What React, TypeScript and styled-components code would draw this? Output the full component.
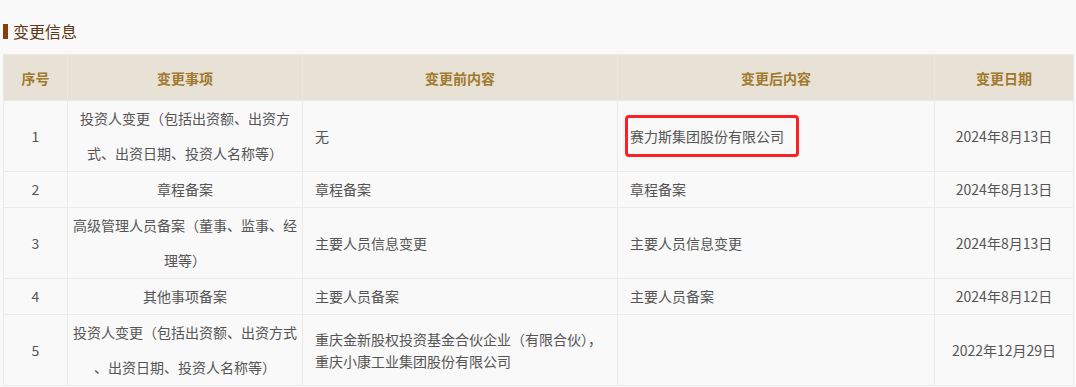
import React from "react";
import styled, { createGlobalStyle } from "styled-components";

const GlobalStyle = createGlobalStyle`
  html, body {
    margin: 0;
    padding: 0;
    background: #f9f9f9;
  }
  body {
    font-family: "Noto Sans CJK SC", "Microsoft YaHei", sans-serif;
    color: #555;
  }
`;

const Page = styled.div`
  padding: 24px 4px 0 3px;
  width: 1076px;
  box-sizing: border-box;
`;

const TitleRow = styled.div`
  display: flex;
  align-items: center;
  gap: 5px;
  height: 15px;
  margin-bottom: 15px;
`;

const Marker = styled.span`
  display: block;
  width: 5px;
  height: 15px;
  background: #8a3d0c;
`;

const TitleText = styled.h3`
  margin: 0;
  font-size: 16px;
  line-height: 15px;
  font-weight: 400;
  color: #5e3716;
`;

const Table = styled.table`
  width: 1070px;
  border-collapse: collapse;
  table-layout: fixed;
  font-size: 14px;
`;

const HeadCell = styled.th`
  height: 45px;
  padding: 0;
  background: #e8e1d6;
  color: #a1792c;
  font-weight: 700;
  font-size: 14px;
  text-align: center;
  border: 1px solid #ebe8e4;
`;

const Cell = styled.td<{ $align?: "left" | "center"; $tight?: boolean }>`
  padding: ${(p) => (p.$tight ? "0 5px" : "7px 12px")};
  line-height: ${(p) => (p.$tight ? "35px" : "21px")};
  text-align: ${(p) => p.$align ?? "left"};
  vertical-align: middle;
  color: #555;
  border: 1px solid #ebebeb;
`;

const MultiLine = styled.div`
  line-height: 22px;
`;

const Highlighted = styled.span`
  position: relative;
  display: inline-block;
  line-height: 20px;

  &::after {
    content: "";
    position: absolute;
    left: -5px;
    right: -15px;
    top: -11px;
    bottom: -11px;
    border: 3px solid #fb2121;
    border-radius: 4px;
    pointer-events: none;
  }
`;

type Row = {
  no: string;
  item: React.ReactNode;
  before: React.ReactNode;
  after: React.ReactNode;
  date: string;
};

const rows: Row[] = [
  {
    no: "1",
    item: "投资人变更（包括出资额、出资方式、出资日期、投资人名称等）",
    before: "无",
    after: <Highlighted>赛力斯集团股份有限公司</Highlighted>,
    date: "2024年8月13日",
  },
  {
    no: "2",
    item: "章程备案",
    before: "章程备案",
    after: "章程备案",
    date: "2024年8月13日",
  },
  {
    no: "3",
    item: "高级管理人员备案（董事、监事、经理等）",
    before: "主要人员信息变更",
    after: "主要人员信息变更",
    date: "2024年8月13日",
  },
  {
    no: "4",
    item: "其他事项备案",
    before: "主要人员备案",
    after: "主要人员备案",
    date: "2024年8月12日",
  },
  {
    no: "5",
    item: (
      <>
        投资人变更（包括出资额、出资方式
        <br />
        、出资日期、投资人名称等）
      </>
    ),
    before: (
      <MultiLine>
        重庆金新股权投资基金合伙企业（有限合伙），
        <br />
        重庆小康工业集团股份有限公司
      </MultiLine>
    ),
    after: "",
    date: "2022年12月29日",
  },
];

export default function App() {
  return (
    <>
      <GlobalStyle />
      <Page>
        <TitleRow>
          <Marker />
          <TitleText>变更信息</TitleText>
        </TitleRow>
        <Table>
          <colgroup>
            <col style={{ width: 64 }} />
            <col style={{ width: 235 }} />
            <col style={{ width: 315 }} />
            <col style={{ width: 317 }} />
            <col style={{ width: 139 }} />
          </colgroup>
          <thead>
            <tr>
              <HeadCell>序号</HeadCell>
              <HeadCell>变更事项</HeadCell>
              <HeadCell>变更前内容</HeadCell>
              <HeadCell>变更后内容</HeadCell>
              <HeadCell>变更日期</HeadCell>
            </tr>
          </thead>
          <tbody>
            {rows.map((r) => (
              <tr key={r.no}>
                <Cell $align="center">{r.no}</Cell>
                <Cell $align="center" $tight>
                  {r.item}
                </Cell>
                <Cell>{r.before}</Cell>
                <Cell>{r.after}</Cell>
                <Cell $align="center">{r.date}</Cell>
              </tr>
            ))}
          </tbody>
        </Table>
      </Page>
    </>
  );
}
